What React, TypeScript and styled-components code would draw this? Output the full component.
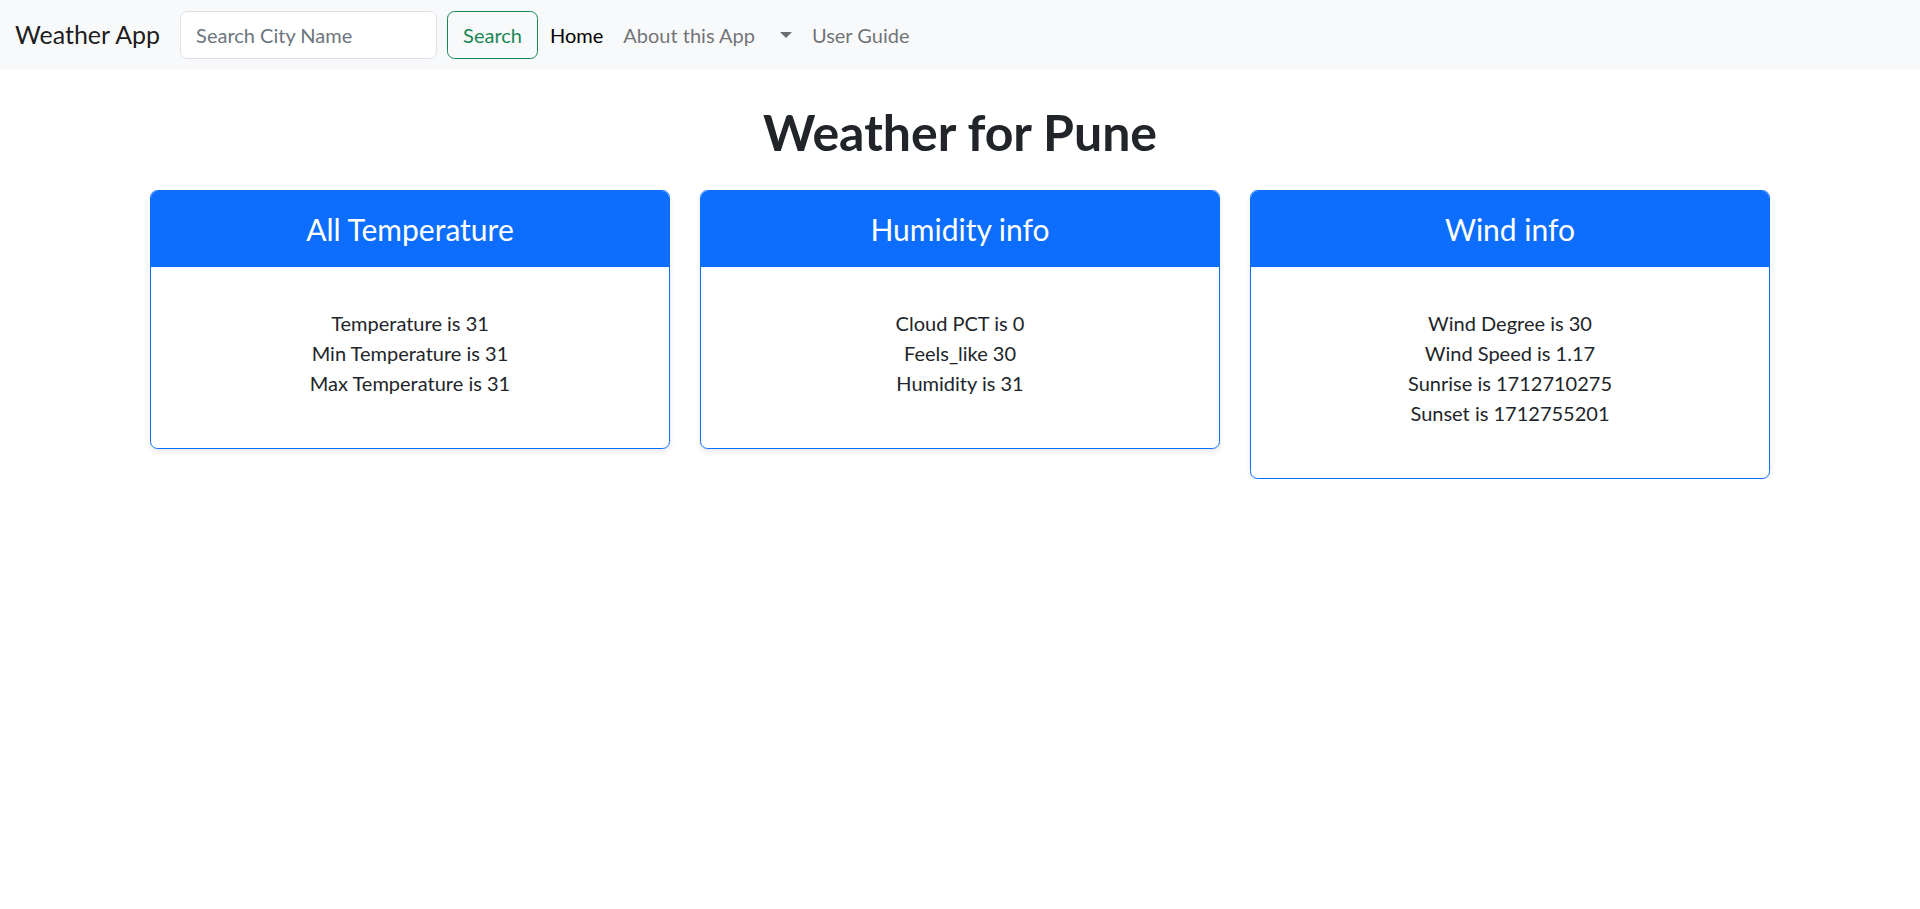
import styled, { createGlobalStyle } from "styled-components";

const GlobalStyle = createGlobalStyle`
    * { box-sizing: border-box; }
    body {
        margin: 0;
        background: #fff;
        color: #212529;
        font-family: Lato, "Liberation Sans", sans-serif;
        font-size: 20px;
        line-height: 1.5;
    }
`;

const Navbar = styled.nav`
    display: flex;
    align-items: center;
    height: 70px;
    padding: 0 15px;
    background-color: #f8f9fa;
`;

const Brand = styled.a`
    font-size: 25px;
    line-height: 37.5px;
    color: rgba(0, 0, 0, 0.9);
    text-decoration: none;
    margin-right: 20px;
`;

const SearchForm = styled.form`
    display: flex;
    gap: 10px;
`;

const SearchInput = styled.input`
    width: 257px;
    height: 47.5px;
    padding: 7.5px 15px;
    font-family: inherit;
    font-size: 20px;
    color: #212529;
    background: #fff;
    border: 1px solid #dee2e6;
    border-radius: 7.5px;
    &::placeholder {
        color: #6c757d;
    }
    &:focus {
        outline: none;
    }
`;

const SearchButton = styled.button`
    height: 47.5px;
    padding: 7.5px 15px;
    font-family: inherit;
    font-size: 20px;
    color: #198754;
    background: transparent;
    border: 1px solid #198754;
    border-radius: 7.5px;
    cursor: pointer;
`;

const NavList = styled.ul`
    display: flex;
    align-items: center;
    list-style: none;
    margin: 0 0 0 2px;
    padding: 0;
`;

const NavLink = styled.a<{ $active?: boolean }>`
    display: block;
    padding: 10px;
    font-size: 20px;
    line-height: 30px;
    text-decoration: none;
    color: ${(p) => (p.$active ? "#000" : "rgba(33, 37, 41, 0.65)")};
`;

const DropdownToggle = styled(NavLink)`
    display: flex;
    align-items: center;
    height: 50px;
    &::after {
        content: "";
        margin-left: 5px;
        border-top: 6px solid;
        border-right: 6px solid transparent;
        border-left: 6px solid transparent;
    }
`;

const Container = styled.main`
    width: 1620px;
    margin: 0 auto;
`;

const Title = styled.h1`
    margin: 32px 0 28px;
    font-size: 50px;
    font-weight: 700;
    line-height: 1.2;
    text-align: center;
    color: #212529;
`;

const CardRow = styled.div`
    display: grid;
    grid-template-columns: repeat(3, 1fr);
    gap: 30px;
    align-items: start;
`;

const Card = styled.section`
    border: 1px solid #0d6efd;
    border-radius: 7.5px;
    overflow: hidden;
    box-shadow: 0 2.5px 5px rgba(0, 0, 0, 0.09);
`;

const CardHeader = styled.h4`
    margin: 0;
    padding: 20px;
    font-size: 30px;
    font-weight: 400;
    line-height: 1.2;
    text-align: center;
    color: #fff;
    background-color: #0d6efd;
`;

const CardBody = styled.div`
    padding: 41px 20px 50px;
    text-align: center;
`;

const InfoLine = styled.div`
    font-size: 20px;
    line-height: 30px;
    color: #212529;
`;

const cards = [
    {
        title: "All Temperature",
        lines: ["Temperature is 31", "Min Temperature is 31", "Max Temperature is 31"],
    },
    {
        title: "Humidity info",
        lines: ["Cloud PCT is 0", "Feels_like 30", "Humidity is 31"],
    },
    {
        title: "Wind info",
        lines: ["Wind Degree is 30", "Wind Speed is 1.17", "Sunrise is 1712710275", "Sunset is 1712755201"],
    },
];

export default function App() {
    return (
        <>
            <GlobalStyle />
            <Navbar>
                <Brand href="#">Weather App</Brand>
                <SearchForm onSubmit={(e) => e.preventDefault()}>
                    <SearchInput type="search" placeholder="Search City Name" />
                    <SearchButton type="submit">Search</SearchButton>
                </SearchForm>
                <NavList>
                    <li><NavLink $active href="#">Home</NavLink></li>
                    <li><NavLink href="#">About this App</NavLink></li>
                    <li><DropdownToggle href="#" aria-label="More" /></li>
                    <li><NavLink href="#">User Guide</NavLink></li>
                </NavList>
            </Navbar>
            <Container>
                <Title>Weather for Pune</Title>
                <CardRow>
                    {cards.map((c) => (
                        <Card key={c.title}>
                            <CardHeader>{c.title}</CardHeader>
                            <CardBody>
                                {c.lines.map((l) => (
                                    <InfoLine key={l}>{l}</InfoLine>
                                ))}
                            </CardBody>
                        </Card>
                    ))}
                </CardRow>
            </Container>
        </>
    );
}
